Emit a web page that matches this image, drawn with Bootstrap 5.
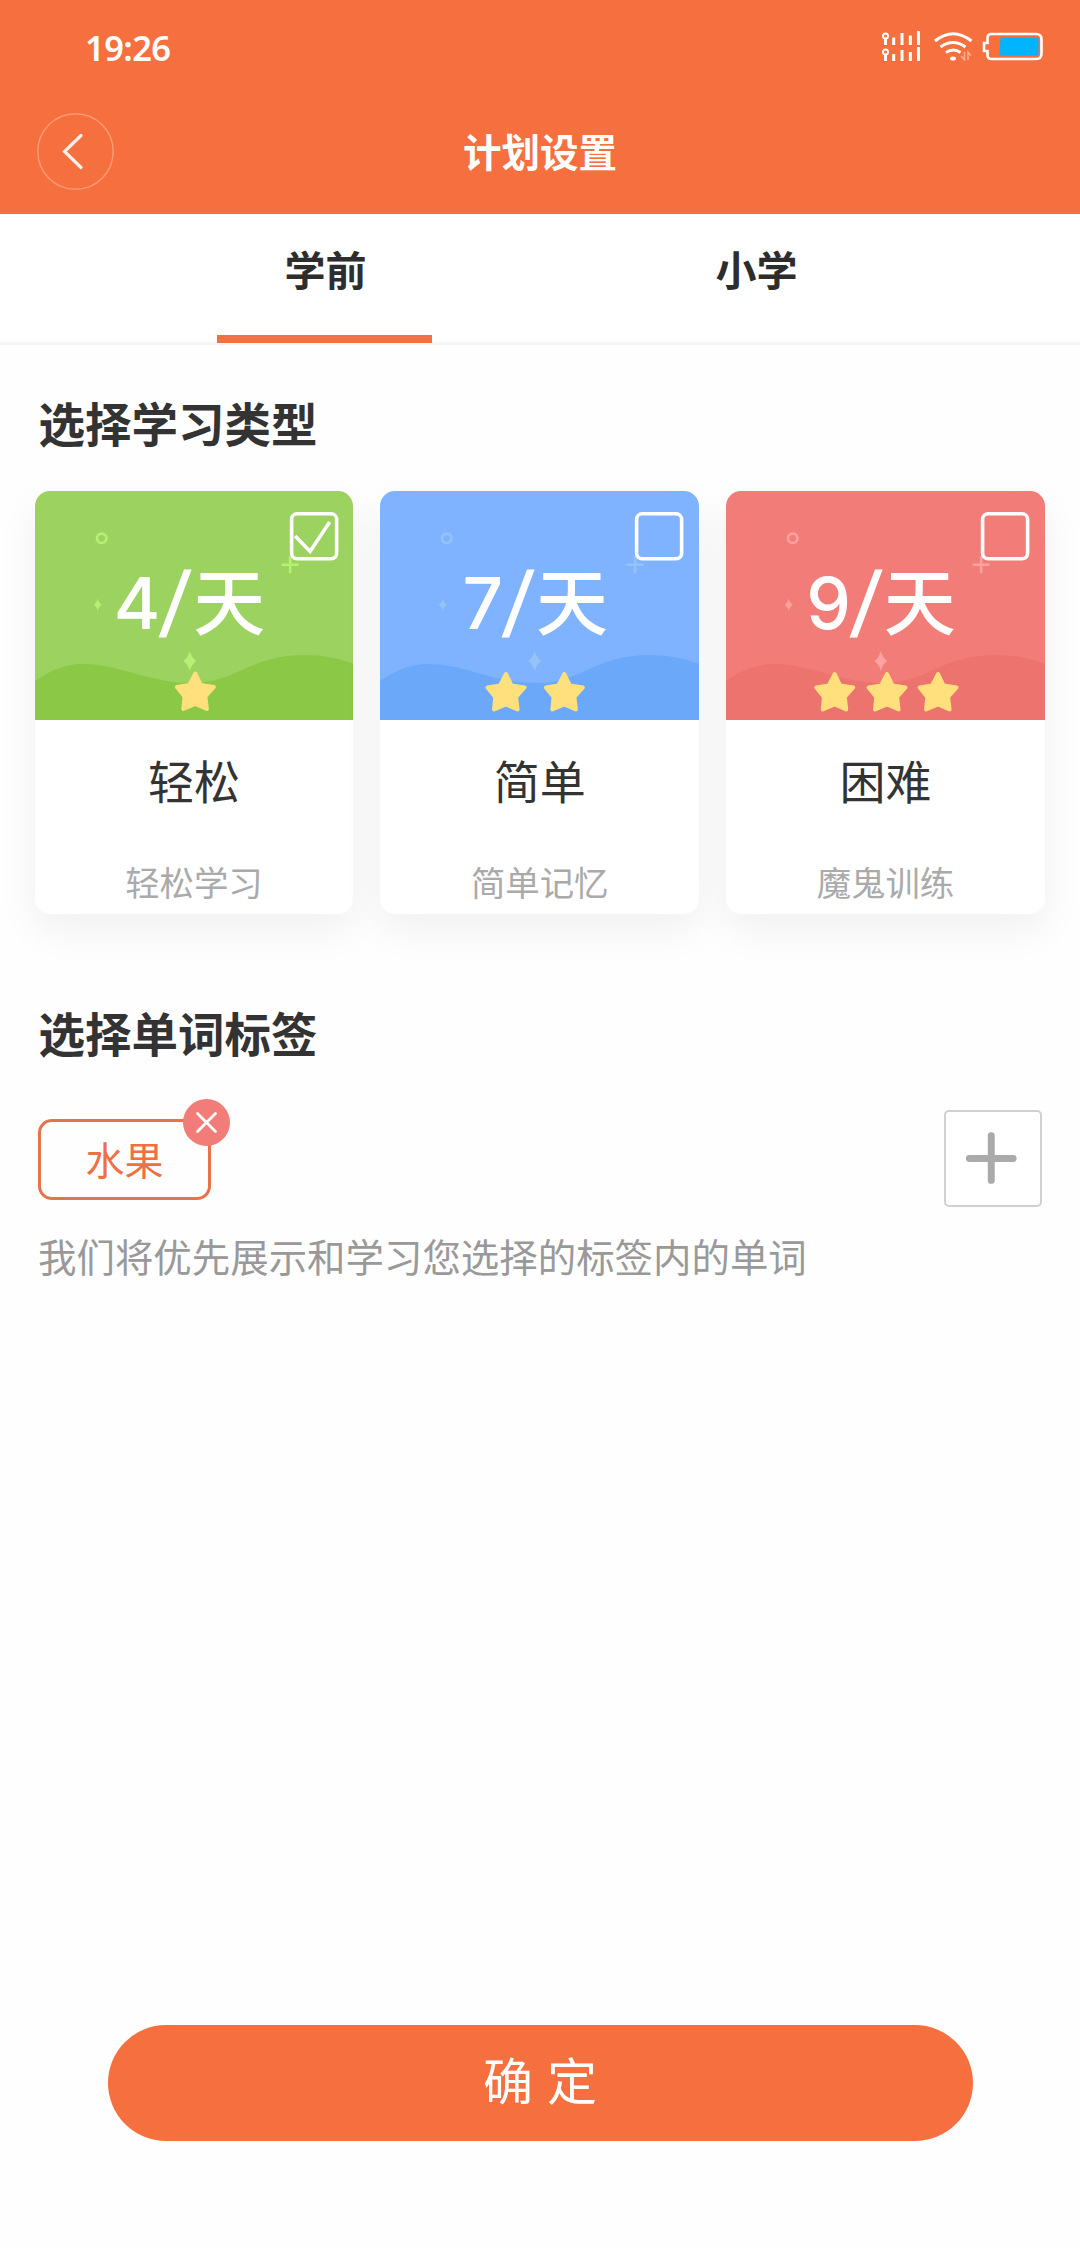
<!DOCTYPE html>
<html lang="zh-CN">
<head>
<meta charset="utf-8">
<meta name="viewport" content="width=device-width, initial-scale=1">
<title>计划设置</title>
<link href="https://cdn.jsdelivr.net/npm/bootstrap@5.3.0/dist/css/bootstrap.min.css" rel="stylesheet">
<style>
body{font-family:"Noto Sans CJK SC",sans-serif;color:#333;background:#fefefe;--brand:#f66f3e}
.screen{width:1080px;height:2248px;overflow:hidden}
.app-head{background:var(--brand);height:214px}
.status{height:96px;padding:0 37px 0 85px}
.status svg{margin-bottom:4px}
.clock{font:600 34.5px/96px "Noto Sans","Noto Sans CJK SC",sans-serif;letter-spacing:-.6px}
.bar{height:110px;padding:0 37px}
.bar-title{font-size:38.5px;line-height:108px;height:110px;font-weight:600}
.back{width:77px;height:77px;margin-top:1px}
.bar-side{width:120px}
.tabs{height:131px;border-bottom:3px solid #f5f5f5;padding:0 109px;background:#fff}
.tabs .nav-link{height:129px;margin-bottom:-1px;padding:24px 0 0 2px;font-size:41px;line-height:60px;font-weight:700;color:#2d2d2d;position:relative}
.tabs .active::after{content:"";position:absolute;left:25%;right:25%;bottom:0;height:8px;background:var(--brand)}
.sec-title{font-size:46.5px;line-height:70px;font-weight:600;margin:0;padding-left:38.5px}
.plans{padding:33.5px 35.2px 0 34.6px;gap:27px}
.plan{border:0;border-radius:15px;height:423px;box-shadow:0 16px 42px rgba(0,0,0,.06);background:#fff}
.cover{height:229.7px;border-radius:15px 15px 0 0;overflow:hidden;position:relative}
.cover svg{display:block;width:100%;height:100%}
.quota{position:absolute;left:0;right:9px;top:57px;font-size:72px;line-height:100px;color:#fff;font-weight:500;white-space:nowrap}
.digit{font-family:Inter,"Noto Sans CJK SC",sans-serif;font-size:71px}
.slash{display:inline-block;font-family:Inter,sans-serif;font-size:78px;line-height:70px;transform:skewX(-6deg);margin:0 3px 0 1px}
.plan-name{font-size:46px;line-height:70px;margin-top:24px}
.plan-note{font-size:34.4px;line-height:50px;margin-top:42px;color:#aaa}
.tag-row{height:98px;padding:0 38.5px 0 38px}
.tag{width:173px;height:81px;border:3px solid #e8734b;border-radius:14px;color:#ee7043;font-size:39px;line-height:73px;text-align:center;margin-top:9px;position:relative;background:transparent;padding:0}
.tag-close{position:absolute;width:47px;height:47px;top:-23px;right:-22px}
.add{width:97.5px;height:97.5px;padding:0;border:2px solid #d0d0d0;border-radius:5px;background:#fff}
.hint{font-size:38.45px;line-height:56px;margin:19px 0 0 38px;color:#999}
.confirm{width:865px;height:116px;background:var(--brand);color:#fff;font-size:50px;line-height:106px;padding:0 0 10px;border:0;margin-bottom:107px;word-spacing:3px}
.confirm:hover{background:var(--brand);color:#fff}
</style>
</head>
<body>
<div class="screen d-flex flex-column">
  <header class="app-head text-white flex-shrink-0">
    <div class="status d-flex justify-content-between align-items-center">
      <span class="clock">19:26</span>
      <svg width="161" height="30" viewBox="883 31 161 30" fill="none" stroke="#fff">
        <g stroke-width="3"><circle cx="886.5" cy="36" r="2.5" stroke-width="2"/><path d="M886.5 38v7M894.700 37.500v7.500M903 33v12M911.300 35.500v9.500M919.500 31v14"/><circle cx="886.500" cy="52" r="2.500" stroke-width="2"/><path d="M886.500 54v7M894.700 54v7M903 50v11M911.300 52v9M919.500 47v14"/></g>
        <g stroke-width="3"><path d="M936 41q18-14.500 36.500 0M941.500 47q12.500-9 25 0M947 52.500q7.500-5 14.500 0"/></g>
        <ellipse cx="954" cy="58.500" rx="3" ry="2" fill="#fff" stroke="none"/>
        <path d="M965.500 52v8l-3.500-4M969 60v-8l3 3.500" stroke="#ffb092" stroke-width="1.500"/>
        <path d="M992.500 34H1037q5.500 0 5.500 5.500v14q0 5.500-5.500 5.500H992.500q-4 0-4-4v-4H985v-8h3.500v-5q0-4 4-4z" stroke-width="2.600"/>
        <path d="M1001.500 37.500H1038q1.500 0 1.500 2v14q0 2-2 2H1000.500z" fill="#00b4ff" stroke="none"/>
      </svg>
    </div>
    <div class="bar d-flex justify-content-between align-items-center">
      <div class="bar-side">
        <svg class="back" viewBox="0 0 77 77" fill="none"><circle cx="38.500" cy="38.500" r="37.700" stroke="#ff9a73" stroke-width="1.500"/><path d="M44 22.500L27.500 38.500 44 54.500" stroke="#fff0e9" stroke-width="3.200" stroke-linecap="round"/></svg>
      </div>
      <div class="bar-title">计划设置</div>
      <div class="bar-side"></div>
    </div>
  </header>
  <nav class="tabs nav nav-fill flex-nowrap flex-shrink-0">
    <a class="nav-link active w-50">学前</a>
    <a class="nav-link w-50">小学</a>
  </nav>

  <h2 class="sec-title" style="margin-top:42px">选择学习类型</h2>
  <div class="plans d-flex">
    <div class="plan card flex-fill text-center">
      <div class="cover">
        <svg viewBox="0 0 318.600 229.700" preserveAspectRatio="none">
          <defs><path id="star" d="M0-17.500L5.500-6 18.500-4 10 5.500 11.500 18 0 13-12 18-10.800 5.500-18.500-4-6-6z" fill="#ffe07c" stroke="#ffe07c" stroke-width="4" stroke-linejoin="round"/>
          <path id="wave" d="M0 190C14 180 30 173 47 173C86 173 112 192 157 192C202 192 214 164 270 164Q296 164 319 173V230H0z"/>
          <g id="decor"><circle cx="66.700" cy="47.300" r="4.700" fill="none" stroke="currentColor" stroke-width="2.600"/><path d="M246.500 73.700h17M255 65.200v17" stroke="currentColor" stroke-width="2.600"/><path d="M62.700 107.500q1 4.500 4.200 6.200q-3.200 1.700-4.200 6.200q-1-4.500-4.200-6.200q3.200-1.700 4.200-6.200zM154.700 160q2 7 6.500 10q-4.500 3-6.500 10q-2-7-6.500-10q4.500-3 6.500-10z" fill="currentColor"/></g>
          <rect id="box" x="256.500" y="22.800" width="45" height="45" rx="5.500" fill="none" stroke="#fff" stroke-width="3.600"/></defs>
          <rect width="319" height="230" fill="#9cd260"/><use href="#wave" fill="#8bc845"/><g color="#b6f172"><use href="#decor"/></g>
          <use href="#box"/><path d="M260 45L275 60.500 294.500 31" fill="none" stroke="#fff" stroke-width="3.600"/>
          <use href="#star" x="160.300" y="200"/>
        </svg>
        <div class="quota"><span class="digit">4</span><span class="slash">/</span>天</div>
      </div>
      <div class="plan-name">轻松</div><div class="plan-note">轻松学习</div>
    </div>
    <div class="plan card flex-fill text-center">
      <div class="cover">
        <svg viewBox="0 0 318.600 229.700" preserveAspectRatio="none">
          <rect width="319" height="230" fill="#80b3ff"/><use href="#wave" fill="#6ca8f9"/><g color="#96c3f5"><use href="#decor"/></g>
          <use href="#box"/><use href="#star" x="126" y="200.500"/><use href="#star" x="184.300" y="200.500"/>
        </svg>
        <div class="quota"><span class="digit">7</span><span class="slash">/</span>天</div>
      </div>
      <div class="plan-name">简单</div><div class="plan-note">简单记忆</div>
    </div>
    <div class="plan card flex-fill text-center">
      <div class="cover">
        <svg viewBox="0 0 318.600 229.700" preserveAspectRatio="none">
          <rect width="319" height="230" fill="#f27c78"/><use href="#wave" fill="#ec736e"/><g color="#ffa19f"><use href="#decor"/></g>
          <use href="#box"/><use href="#star" x="108.700" y="200.500"/><use href="#star" x="161" y="200.500"/><use href="#star" x="212" y="200.500"/>
        </svg>
        <div class="quota"><span class="digit">9</span><span class="slash">/</span>天</div>
      </div>
      <div class="plan-name">困难</div><div class="plan-note">魔鬼训练</div>
    </div>
  </div>

  <h2 class="sec-title" style="margin-top:83px">选择单词标签</h2>
  <div class="tag-row d-flex justify-content-between align-items-start" style="margin-top:43px">
    <div class="tag">水果
      <svg class="tag-close" viewBox="0 0 47 47"><circle cx="23.500" cy="23.500" r="23.500" fill="#f27c78"/><path d="M14.500 14.500l18 18M32.500 14.500l-18 18" stroke="#fff" stroke-width="2.800" stroke-linecap="round"/></svg>
    </div>
    <button class="add d-flex" type="button" aria-label="添加"><svg width="94" height="94" viewBox="0 0 94 94"><path d="M23.500 46.500h44M45.500 23.500v45" stroke="#aaa" stroke-width="7" stroke-linecap="round"/></svg></button>
  </div>
  <p class="hint">我们将优先展示和学习您选择的标签内的单词</p>
  <button class="confirm btn rounded-pill mt-auto mx-auto flex-shrink-0" type="button">确 定</button>
</div>
<script src="https://cdn.jsdelivr.net/npm/bootstrap@5.3.0/dist/js/bootstrap.bundle.min.js"></script>
</body>
</html>
